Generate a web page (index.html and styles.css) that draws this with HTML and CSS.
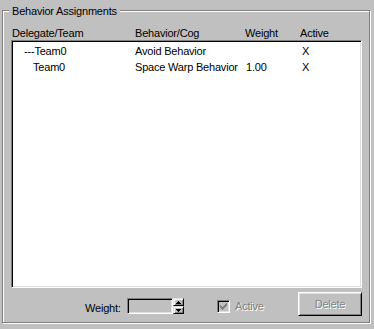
FILE: index.html
```html
<!DOCTYPE html>
<html>
<head>
<meta charset="utf-8">
<link rel="stylesheet" href="styles.css">
</head>
<body>
<div class="group">
  <div class="legend">Behavior Assignments</div>
  <div class="cols header">
    <div>Delegate/Team</div>
    <div>Behavior/Cog</div>
    <div>Weight</div>
    <div>Active</div>
  </div>
  <div class="list">
    <div class="cols row">
      <div class="c1 lvl0">---Team0</div>
      <div>Avoid Behavior</div>
      <div class="c3"></div>
      <div class="c4">X</div>
    </div>
    <div class="cols row">
      <div class="c1 lvl1">Team0</div>
      <div>Space Warp Behavior</div>
      <div class="c3">1.00</div>
      <div class="c4">X</div>
    </div>
  </div>
  <div class="bottom">
    <div class="wlabel">Weight:</div>
    <div class="edit"></div>
    <div class="spin">
      <div class="spinbtn"><svg width="5" height="3" viewBox="0 0 5 3"><path d="M2 0h1v1h1v1h1v1H0V2h1V1h1z" fill="#000"/></svg></div>
      <div class="spinbtn"><svg width="5" height="3" viewBox="0 0 5 3"><path d="M0 0h5v1H4v1H3v1H2V2H1V1H0z" fill="#000"/></svg></div>
    </div>
    <div class="check">
      <svg width="7" height="7" viewBox="0 0 7 7"><path d="M6 0h1v3H6v1H5v1H4v1H3v1H2V6H1V5H0V2h1v1h1v1h1V3h1V2h1V1h1z" fill="#808080"/></svg>
    </div>
    <div class="chklabel disabled">Active</div>
    <div class="button disabled">Delete</div>
  </div>
</div>
</body>
</html>
```

FILE: styles.css
```css
html, body {
  margin: 0;
  padding: 0;
  background: #c0c0c0;
}
body {
  width: 374px;
  height: 329px;
  overflow: hidden;
  font-family: "Liberation Sans", Arial, sans-serif;
  font-size: 11px;
  line-height: 16px;
  letter-spacing: -0.2px;
  color: #000;
}
.group {
  position: relative;
  box-sizing: border-box;
  margin: 10px 0 0 2px;
  width: 368px;
  height: 313px;
  border: 1px solid #808080;
  box-shadow: 1px 1px 0 #fff, inset 1px 1px 0 #fff;
  padding: 14px 0 0 8px;
}
.legend {
  position: absolute;
  left: 6px;
  top: -8px;
  padding: 0 3px;
  background: #c0c0c0;
  white-space: nowrap;
}
.cols {
  display: grid;
  grid-template-columns: 123px 110px 55px 1fr;
  white-space: nowrap;
}
.cols > div {
  overflow: hidden;
}
.header {
  height: 15px;
  padding-left: 1px;
}
.list {
  box-sizing: border-box;
  width: 351px;
  height: 248px;
  background: #fff;
  border: 1px solid;
  border-color: #808080 #fff #fff #808080;
  box-shadow: inset 1px 1px 0 #000, inset -1px -1px 0 #dfdfdf;
  padding-top: 2px;
}
.row {
  height: 16px;
}
.lvl0 { padding-left: 12px; }
.lvl1 { padding-left: 21px; }
.c3 { padding-left: 1px; }
.c4 { padding-left: 2px; }
.bottom {
  display: flex;
  align-items: flex-start;
}
.wlabel {
  width: 42px;
  margin: 12px 0 0 74px;
}
.edit {
  box-sizing: border-box;
  width: 46px;
  height: 16px;
  margin-top: 10px;
  background: #c0c0c0;
  border: 1px solid;
  border-color: #808080 #fff #fff #808080;
  box-shadow: inset 1px 1px 0 #000, inset -1px -1px 0 #dfdfdf;
}
.spin {
  display: flex;
  flex-direction: column;
  width: 11px;
  margin-top: 10px;
}
.spinbtn {
  box-sizing: border-box;
  width: 11px;
  height: 8px;
  background: #c0c0c0;
  border: 1px solid;
  border-color: #dfdfdf #000 #000 #dfdfdf;
  box-shadow: inset 1px 1px 0 #fff, inset -1px -1px 0 #808080;
  display: flex;
  align-items: center;
  justify-content: center;
}
.spinbtn svg { display: block; }
.check {
  box-sizing: border-box;
  width: 13px;
  height: 13px;
  margin: 12px 0 0 33px;
  background: #c0c0c0;
  border: 1px solid;
  border-color: #808080 #fff #fff #808080;
  box-shadow: inset 1px 1px 0 #000, inset -1px -1px 0 #dfdfdf;
  padding: 2px 0 0 2px;
}
.check svg { display: block; }
.disabled {
  color: #808080;
  text-shadow: 1px 1px 0 #fff;
}
.chklabel {
  box-sizing: border-box;
  width: 68px;
  padding-left: 5px;
  margin-top: 10px;
}
.button {
  box-sizing: border-box;
  width: 64px;
  height: 24px;
  margin-top: 4px;
  border: 1px solid;
  border-color: #fff #000 #000 #fff;
  box-shadow: inset 1px 1px 0 #dfdfdf, inset -1px -1px 0 #808080;
  display: flex;
  align-items: center;
  justify-content: center;
}
```
